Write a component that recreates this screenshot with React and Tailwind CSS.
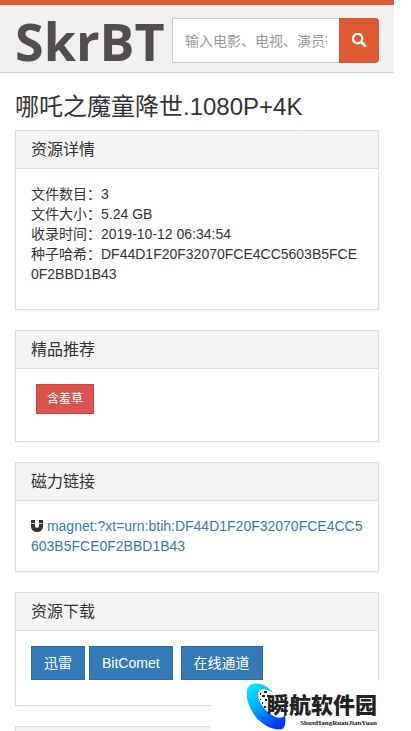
import React, { useState } from "react";

const HASH = "DF44D1F20F32070FCE4CC5603B5FCE0F2BBD1B43";

const details = [
  { label: "文件数目", value: "3" },
  { label: "文件大小", value: "5.24 GB" },
  { label: "收录时间", value: "2019-10-12 06:34:54" },
  { label: "种子哈希", value: HASH },
];

const SearchIcon = () => (
  <svg className="w-4 h-4" viewBox="0 0 16 16" fill="none" stroke="currentColor" aria-hidden="true">
    <circle cx="6.7" cy="5.6" r="4.7" strokeWidth="2.3" />
    <path d="M10.4 9.3l3.6 3.4" strokeWidth="2.9" strokeLinecap="round" />
  </svg>
);

const MagnetIcon = () => (
  <svg className="inline-block align-[-1px] w-3 h-3" viewBox="0 0 12 12" fill="currentColor" aria-hidden="true">
    <path d="M0 0h4v3.2H0zM8 0h4v3.2H8z" />
    <path d="M0 4h4v2c0 1.2.7 1.8 2 1.8S8 7.2 8 6V4h4v2.2c0 3.4-2.4 5.8-6 5.8S0 9.6 0 6.2z" />
  </svg>
);

const Panel = ({ title, children }) => (
  <section className="mb-5 border border-[#ddd] bg-white shadow-xs">
    <h2 className="px-[15px] py-2.5 text-base leading-[17px] bg-[#f4f4f4] border-b border-[#ddd]">{title}</h2>
    <div className="p-[15px]">{children}</div>
  </section>
);

const Watermark = () => (
  <div className="absolute bottom-0 right-0 w-[200px] h-[50px] pl-9 flex bg-white text-[#222]">
    <svg className="w-10 h-12 mt-0.5 shrink-0" viewBox="0 0 40 48" aria-hidden="true">
      <defs>
        <linearGradient id="swoosh" x1="0" y1="0" x2="0.6" y2="1">
          <stop offset="0" stopColor="#00f4ff" />
          <stop offset="0.5" stopColor="#00a8ff" />
          <stop offset="1" stopColor="#0038ff" />
        </linearGradient>
      </defs>
      <path
        d="M26 10C20 1 8-2 2 3C-3 8 0 22 8 33C16 43 28 48 35 46C38 45 39 40 38 32C36 35 31 36 25 32C17 27 11 18 11 11C11 6 18 4 26 10Z"
        fill="url(#swoosh)"
      />
      <path
        d="M17 8h3v2h-3zM13 10h1v2h-1zM20 12h2v2h-2zM15 12h3v2h-3zM13 16h1v1h-1zM18 16h2v2h-2zM15 19h1v2h-1zM17 23h2v2h-2z"
        fill="#222"
      />
    </svg>
    <div className="-ml-5 pt-2.5 flex flex-col items-end font-['Noto_Sans_CJK_SC',sans-serif]">
      <span className="text-[22px] leading-6 font-black">瞬航软件园</span>
      <span className="mt-1 text-[7px] leading-2 font-bold font-['Liberation_Serif',serif]">
        ShunHangRuanJianYuan
      </span>
    </div>
  </div>
);

const App = () => {
  const [keyword, setKeyword] = useState("");

  return (
    <div className="relative h-screen overflow-hidden pr-[17px] bg-white text-[#333] text-sm leading-5 font-['Liberation_Sans','Noto_Sans_CJK_SC',sans-serif]">
      <header className="border-t-5 border-t-[#dd5a33] border-b border-b-[#d9d9d9] bg-[#f0f0f0]">
        <form
          className="flex items-center gap-2 px-[15px] pt-[13px] pb-[9px]"
          onSubmit={(e) => e.preventDefault()}
        >
          <a
            href="#"
            className="w-[149px] shrink-0 font-['Open_Sans',sans-serif] font-bold text-[52px] leading-[42px] text-[#544d4d]"
          >
            SkrBT
          </a>
          <div className="flex flex-1 min-w-0 h-[45px]">
            <input
              type="text"
              aria-label="搜索"
              value={keyword}
              onChange={(e) => setKeyword(e.target.value)}
              placeholder="输入电影、电视、演员等"
              className="flex-1 min-w-0 px-3 bg-white border border-r-0 border-[#ccc] placeholder-[#999] focus:outline-none focus:border-[#dd5a33]"
            />
            <button
              type="submit"
              aria-label="搜索"
              className="w-10 flex items-center justify-center rounded-r bg-[#dd5a33] text-white"
            >
              <SearchIcon />
            </button>
          </div>
        </form>
      </header>

      <main className="px-[15px] pt-5">
        <h1 className="mb-2.5 text-2xl leading-[27px]">哪吒之魔童降世.1080P+4K</h1>

        <Panel title="资源详情">
          <div className="mb-2.5 break-all">
            {details.map((item) => (
              <p key={item.label}>{`${item.label}：${item.value}`}</p>
            ))}
          </div>
        </Panel>

        <Panel title="精品推荐">
          <button
            type="button"
            className="block ml-[5px] mb-3 px-2.5 h-[30px] text-xs bg-[#d9534f] border border-[#d43f3a] text-white"
          >
            含羞草
          </button>
        </Panel>

        <Panel title="磁力链接">
          <p className="break-all">
            <MagnetIcon />{" "}
            <a href={`magnet:?xt=urn:btih:${HASH}`} className="text-[#337ab7]">
              {`magnet:?xt=urn:btih:${HASH}`}
            </a>
          </p>
        </Panel>

        <Panel title="资源下载">
          <div className="mb-2.5 flex gap-1">
            <button type="button" className="px-3 h-[34px] bg-[#337ab7] border border-[#2e6da4] text-white">
              迅雷
            </button>
            <button type="button" className="px-3 h-[34px] bg-[#337ab7] border border-[#2e6da4] text-white">
              BitComet
            </button>
            <button type="button" className="ml-1 px-3 h-[34px] bg-[#337ab7] border border-[#2e6da4] text-white">
              在线通道
            </button>
          </div>
        </Panel>

        <Panel />
      </main>

      <Watermark />
    </div>
  );
};

export default App;
